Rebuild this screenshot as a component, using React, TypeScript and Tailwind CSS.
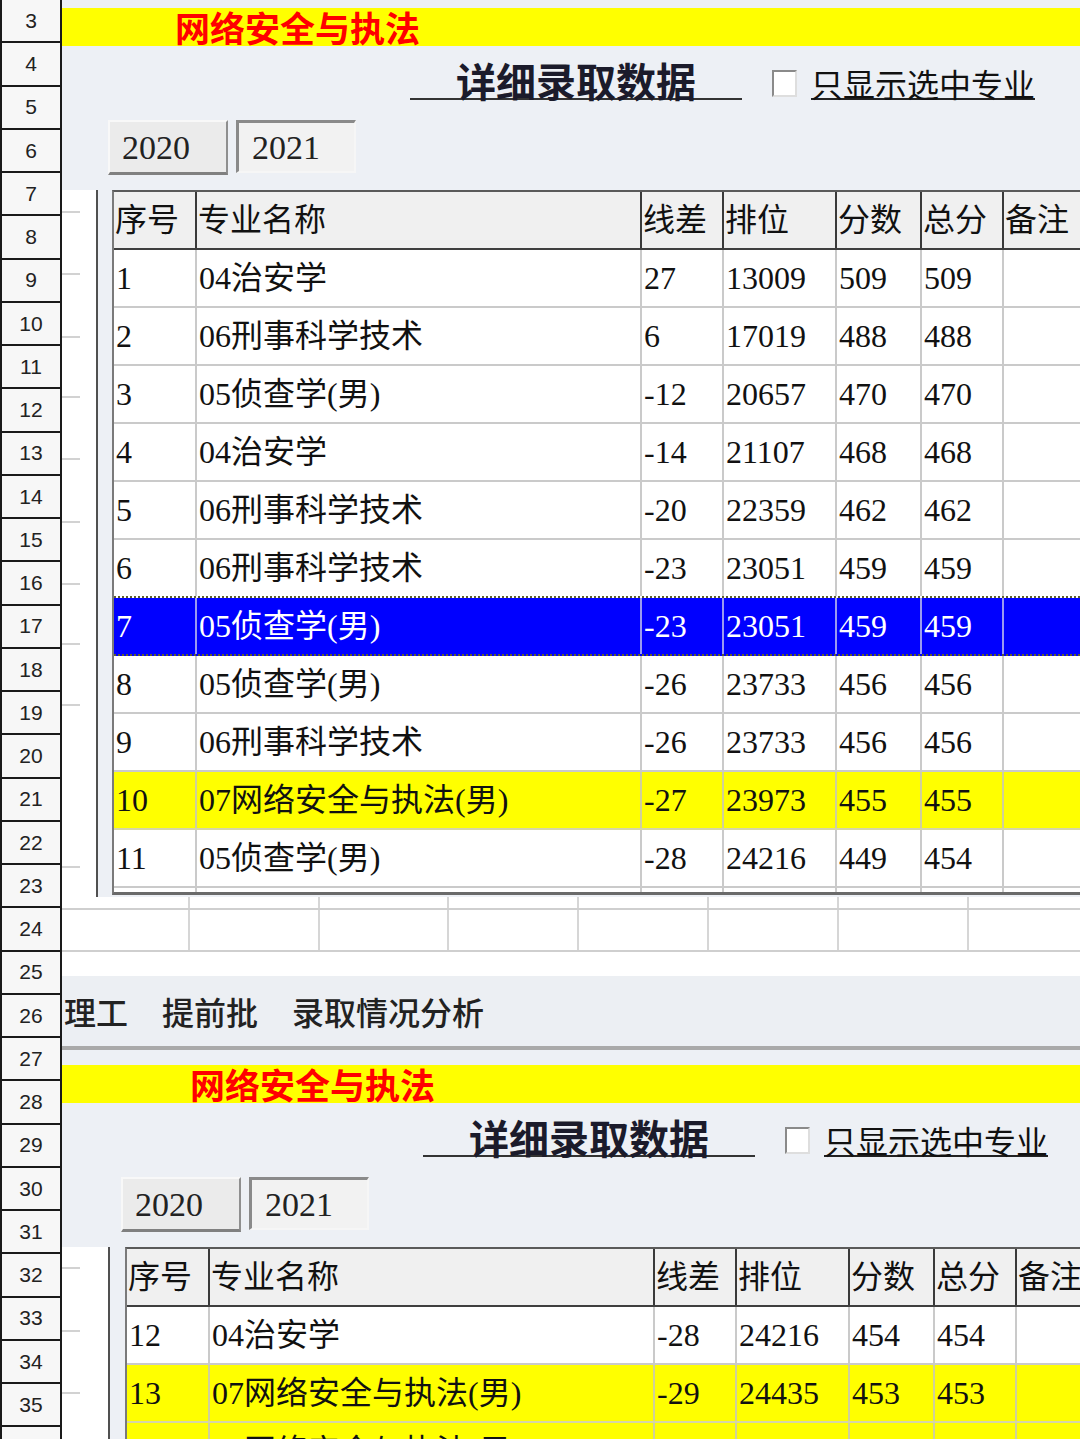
import React from "react";

type Row = {
  no: string;
  name: string;
  diff: string;
  rank: string;
  score: string;
  total: string;
  tone?: "blue" | "yellow";
};

const topRows: Row[] = [
  { no: "1", name: "04治安学", diff: "27", rank: "13009", score: "509", total: "509" },
  { no: "2", name: "06刑事科学技术", diff: "6", rank: "17019", score: "488", total: "488" },
  { no: "3", name: "05侦查学(男)", diff: "-12", rank: "20657", score: "470", total: "470" },
  { no: "4", name: "04治安学", diff: "-14", rank: "21107", score: "468", total: "468" },
  { no: "5", name: "06刑事科学技术", diff: "-20", rank: "22359", score: "462", total: "462" },
  { no: "6", name: "06刑事科学技术", diff: "-23", rank: "23051", score: "459", total: "459" },
  { no: "7", name: "05侦查学(男)", diff: "-23", rank: "23051", score: "459", total: "459", tone: "blue" },
  { no: "8", name: "05侦查学(男)", diff: "-26", rank: "23733", score: "456", total: "456" },
  { no: "9", name: "06刑事科学技术", diff: "-26", rank: "23733", score: "456", total: "456" },
  { no: "10", name: "07网络安全与执法(男)", diff: "-27", rank: "23973", score: "455", total: "455", tone: "yellow" },
  { no: "11", name: "05侦查学(男)", diff: "-28", rank: "24216", score: "449", total: "454" },
  { no: "", name: "", diff: "", rank: "", score: "", total: "" },
];

const bottomRows: Row[] = [
  { no: "12", name: "04治安学", diff: "-28", rank: "24216", score: "454", total: "454" },
  { no: "13", name: "07网络安全与执法(男)", diff: "-29", rank: "24435", score: "453", total: "453", tone: "yellow" },
  { no: "14", name: "07网络安全与执法(男)", diff: "-29", rank: "24435", score: "453", total: "453", tone: "yellow" },
];

const headers = ["序号", "专业名称", "线差", "排位", "分数", "总分", "备注"];
const widths = ["w-[83px]", "w-[445px]", "w-[82px]", "w-[113px]", "w-[85px]", "w-[82px]", "w-[140px]"];
// SimSun-like: serif half-width digits, CJK from Noto
const cellFont = "font-['Liberation_Serif','Noto_Sans_CJK_SC',serif]";

function RowHeaders() {
  const nums = Array.from({ length: 34 }, (_, i) => i + 3);
  return (
    <div className="w-[62px] shrink-0 flex flex-col border-l-2 border-r-2 border-[#1a1a1a]">
      {nums.map((n) => (
        <div
          key={n}
          className="shrink-0 h-[43.25px] border-b-2 border-[#1a1a1a] bg-[#f7f7f7] flex items-center justify-center text-[21px] text-[#222] font-['Liberation_Sans',sans-serif]"
        >
          {n}
        </div>
      ))}
    </div>
  );
}

function DataRow({ r, beforeBlue }: { r: Row; beforeBlue: boolean }) {
  const bg =
    r.tone === "blue" ? "bg-[#0000ff] text-white" : r.tone === "yellow" ? "bg-[#ffff00] text-[#111]" : "bg-white text-[#111]";
  const bottom =
    r.tone === "blue" || beforeBlue
      ? "border-dotted border-[#5e5e2e]"
      : r.tone === "yellow"
      ? "border-[#d6d6a6]"
      : "border-[#cacaca]";
  const line = r.tone === "blue" ? "border-[#9a9af0]" : r.tone === "yellow" ? "border-[#d0d09a]" : "border-[#cacaca]";
  const vals = [r.no, r.name, r.diff, r.rank, r.score, r.total, ""];
  return (
    <div className={`flex shrink-0 h-[58px] border-b-2 ${bottom} ${bg}`}>
      {vals.map((v, i) => (
        <div
          key={i}
          className={`${widths[i]} shrink-0 h-full flex items-center pl-[2px] border-r-2 ${line} whitespace-nowrap overflow-hidden`}
        >
          {v}
        </div>
      ))}
    </div>
  );
}

function Table({ rows }: { rows: Row[] }) {
  return (
    <div
      className={`flex-1 h-[705px] overflow-hidden bg-white border-l-2 border-t-2 border-b-[3px] border-l-[#7a7a7a] border-t-[#5a5a5a] border-b-[#6a6a6a] text-[32px] leading-none ${cellFont}`}
    >
      <div className="flex shrink-0 h-[58px] border-b-2 border-[#3f3f3f] bg-[#f0f0f0] text-[#111]">
        {headers.map((h, i) => (
          <div
            key={h}
            className={`${widths[i]} shrink-0 h-full flex items-center pl-[1px] border-r-2 border-[#3a3a3a] whitespace-nowrap`}
          >
            {h}
          </div>
        ))}
      </div>
      {rows.map((r, i) => (
        <DataRow key={i} r={r} beforeBlue={rows[i + 1]?.tone === "blue"} />
      ))}
    </div>
  );
}

function Form({ second, rows }: { second: boolean; rows: Row[] }) {
  const stubs = second
    ? ["mt-[20px]", "mt-[61px]", "mt-[60px]"]
    : ["mt-[21px]", "mt-[60px]", "mt-[61px]", "mt-[58px]", "mt-[60px]", "mt-[61px]", "mt-[60px]", "mt-[58px]", "mt-[59px]", "mt-[160px]"];
  return (
    <div
      className={`${second ? "flex-1 pt-[15px]" : "h-[897px] pt-[8px]"} shrink-0 overflow-hidden bg-[#edf0f5] flex flex-col font-['Noto_Sans_CJK_SC',sans-serif]`}
    >
      <div className="h-[38px] shrink-0 bg-[#ffff00] flex items-center">
        <span className={`${second ? "pl-[128px]" : "pl-[113px]"} text-[35px] leading-[38px] font-bold text-[#ff0000]`}>
          网络安全与执法
        </span>
      </div>

      <div className={`${second ? "pl-[13px]" : "pl-0"} shrink-0 flex flex-col`}>
        <div className="h-[74px] flex items-start">
          <div className="ml-[348px] mt-[9px] w-[332px] h-[45px] border-b-2 border-[#333] text-center text-[40px] leading-[50px] font-bold text-[#1b1b2b]">
            详细录取数据
          </div>
          <div className="ml-[30px] mt-[24px] w-[25px] h-[27px] bg-white border-2 border-t-[#8a8a8a] border-l-[#8a8a8a] border-b-[#dedede] border-r-[#dedede]" />
          <div className="ml-[14px] mt-[14px] h-[40px] border-b-2 border-[#222] text-[32px] leading-[46px] text-[#111] whitespace-nowrap">
            只显示选中专业
          </div>
        </div>

        <div className={`h-[55px] flex items-start text-[34px] text-[#222] ${cellFont}`}>
          <div className="ml-[46px] w-[120px] h-[55px] flex items-center pl-[12px] bg-[#ebebeb] border-2 border-t-[#f8f8f8] border-l-[#f8f8f8] border-b-[3px] border-b-[#808080] border-r-[#8f8f8f]">
            2020
          </div>
          <div className="ml-[8px] w-[120px] h-[53px] flex items-center pl-[13px] bg-[#f2f2f2] border-t-[3px] border-l-[3px] border-b-2 border-r-2 border-t-[#8a8a8a] border-l-[#8a8a8a] border-b-[#f6f6f6] border-r-[#f6f6f6]">
            2021
          </div>
        </div>
      </div>

      <div className="mt-[15px] h-[707px] shrink-0 flex items-start">
        <div className={`${second ? "w-[48px]" : "w-[36px]"} h-full shrink-0 bg-white border-r-2 border-[#505050] flex flex-col`}>
          {stubs.map((m, i) => (
            <div key={i} className={`${m} w-[18px] h-[2px] bg-[#d2d2d2]`} />
          ))}
        </div>
        <div className={second ? "ml-[15px] flex-1 min-w-0 flex" : "ml-[14px] flex-1 min-w-0 flex"}>
          <Table rows={rows} />
        </div>
      </div>
    </div>
  );
}

const gridCells = ["w-[128px]", "w-[130px]", "w-[129px]", "w-[130px]", "w-[130px]", "w-[130px]", "w-[130px]", "w-[130px]"];

function GridStrip({ h }: { h: string }) {
  return (
    <div className={`${h} shrink-0 flex`}>
      {gridCells.map((w, i) => (
        <div key={i} className={`${w} shrink-0 h-full border-r-2 border-[#d6d6d6]`} />
      ))}
    </div>
  );
}

function SheetGap() {
  return (
    <div className="h-[79px] shrink-0 bg-white flex flex-col">
      <GridStrip h="h-[11px]" />
      <div className="h-[2px] shrink-0 bg-[#cfcfcf]" />
      <GridStrip h="h-[40px]" />
      <div className="h-[2px] shrink-0 bg-[#cfcfcf]" />
      <div className="h-[24px] shrink-0" />
    </div>
  );
}

function TabBar() {
  return (
    <div className="h-[74px] shrink-0 bg-[#eceff3] border-b-4 border-[#a9a9a9] flex items-center pl-[2px] gap-[34px] text-[32px] font-medium text-[#222] font-['Noto_Sans_CJK_SC',sans-serif]">
      <span>理工</span>
      <span>提前批</span>
      <span>录取情况分析</span>
    </div>
  );
}

export default function App() {
  return (
    <div className="w-[1080px] h-[1439px] overflow-hidden flex bg-white">
      <RowHeaders />
      <div className="flex-1 min-w-0 flex flex-col overflow-hidden">
        <Form second={false} rows={topRows} />
        <SheetGap />
        <TabBar />
        <Form second={true} rows={bottomRows} />
      </div>
    </div>
  );
}
